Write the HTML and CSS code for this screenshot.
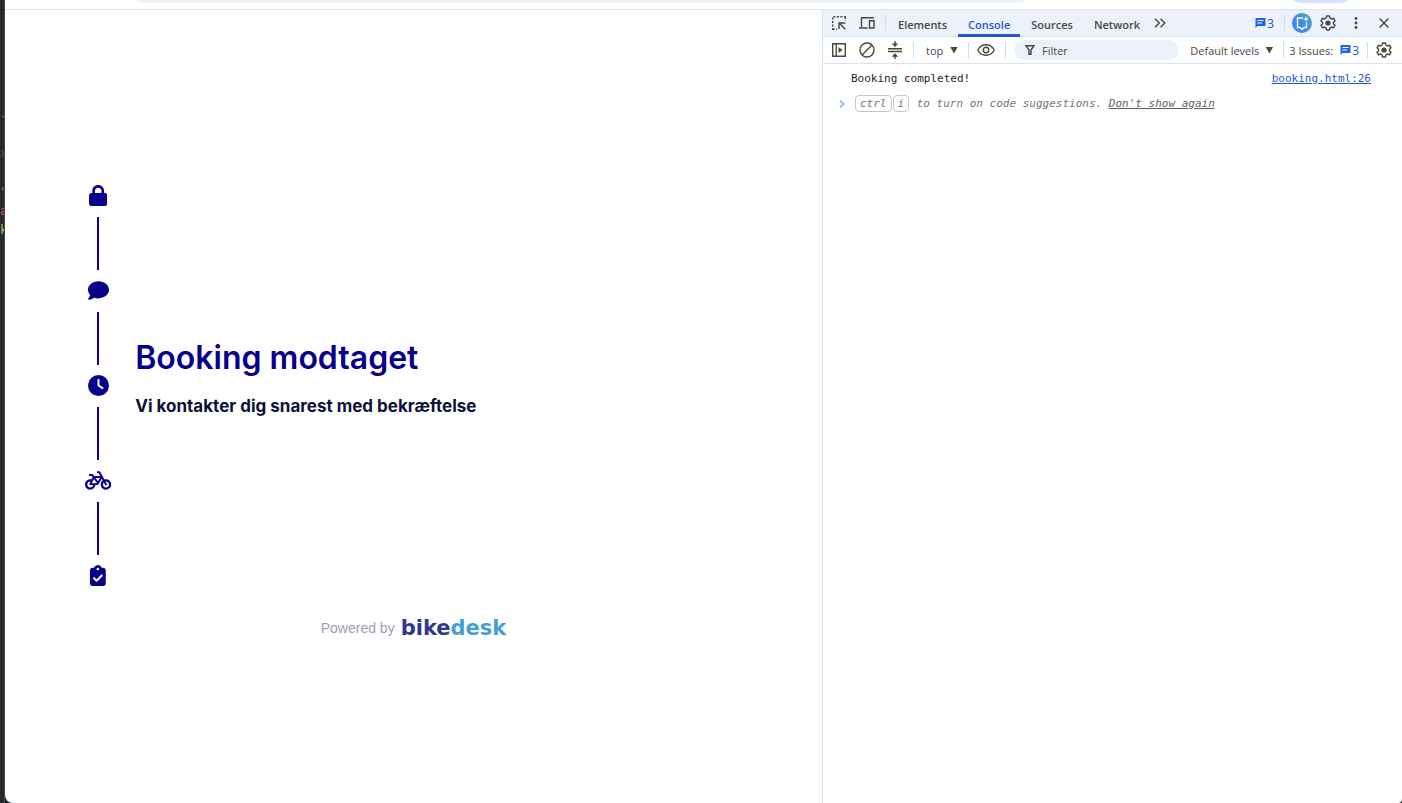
FILE: index.html
```html
<!DOCTYPE html>
<html lang="da">
<head>
    <meta charset="UTF-8">
    <meta name="viewport" content="width=device-width, initial-scale=1.0">
    <title>Booking</title>
    <link rel="stylesheet" href="styles.css">
</head>
<body>
    <div class="editor">
        <span class="green">-</span>
        <span class="grey">x</span>
        <span class="green">"</span>
        <span class="red">a</span>
        <span class="lime">k</span>
    </div>

    <div class="window">
        <div class="browser-bar">
            <div class="address"></div>
            <div class="profile"></div>
        </div>

        <div class="content">
            <main class="page">
                <div class="booking">
                    <div class="timeline">
                        <div class="step"><svg viewBox="0 0 448 512"><path d="M144 144v48H304V144c0-44.2-35.8-80-80-80s-80 35.8-80 80zM80 192V144C80 64.5 144.5 0 224 0s144 64.5 144 144v48h16c35.3 0 64 28.7 64 64V448c0 35.3-28.7 64-64 64H64c-35.3 0-64-28.7-64-64V256c0-35.3 28.7-64 64-64H80z"/></svg></div>
                        <div class="line"></div>
                        <div class="step"><svg viewBox="0 0 512 512"><path d="M512 240c0 114.9-114.6 208-256 208c-37.1 0-72.3-6.4-104.1-17.9c-11.9 8.7-31.3 20.6-54.3 30.6C73.6 471.1 44.7 480 16 480c-6.5 0-12.3-3.9-14.8-9.9c-2.5-6-1.1-12.8 3.4-17.4l.3-.3c.3-.3 .7-.7 1.3-1.4c1.1-1.2 2.8-3.1 4.9-5.7c4.1-5 9.6-12.4 15.2-21.6c10-16.6 19.5-38.4 21.4-62.9C17.7 326.8 0 285.1 0 240C0 125.1 114.6 32 256 32s256 93.1 256 208z"/></svg></div>
                        <div class="line"></div>
                        <div class="step"><svg viewBox="0 0 512 512"><path d="M256 0a256 256 0 1 1 0 512A256 256 0 1 1 256 0zM232 120V256c0 8 4 15.5 10.7 20l96 64c11 7.4 25.9 4.4 33.3-6.7s4.4-25.9-6.7-33.3L280 243.2V120c0-13.3-10.7-24-24-24s-24 10.7-24 24z"/></svg></div>
                        <div class="line"></div>
                        <div class="step"><svg viewBox="0 0 640 512"><path d="M312 32c-13.3 0-24 10.7-24 24s10.7 24 24 24h25.7l34.6 64H222.9l-27.4-38C191 99.7 183.7 96 176 96H120c-13.3 0-24 10.7-24 24s10.7 24 24 24h43.7l22.1 30.7-26.6 53.1c-10-2.5-20.5-3.8-31.2-3.8C57.3 224 0 281.3 0 352s57.3 128 128 128c65.3 0 119.1-48.9 127-112h49c8.5 0 16.3-4.5 20.7-11.8l84.8-143.5 21.7 40.1C402.4 276.3 384 312 384 352c0 70.7 57.3 128 128 128s128-57.3 128-128s-57.3-128-128-128c-13.5 0-26.5 2.1-38.7 6L375.4 48.8C369.8 38.4 359 32 347.2 32H312zM458.6 303.7l32.3 59.7c6.3 11.7 20.9 16 32.5 9.7s16-20.9 9.7-32.5l-32.3-59.7c3.6-.6 7.4-.9 11.2-.9c39.8 0 72 32.2 72 72s-32.2 72-72 72s-72-32.2-72-72c0-18.6 7-35.5 18.6-48.3zM133.2 368h65c-7.3 32.1-36 56-70.2 56c-39.8 0-72-32.2-72-72s32.2-72 72-72c1.7 0 3.4 .1 5.1 .2l-24.2 48.5c-9 18.1 4.1 39.4 24.3 39.4zm33.7-48l50.7-101.3 72.9 101.2-.1 .1H166.8zm90.6-128H365.9L317 274.8 257.4 192z"/></svg></div>
                        <div class="line"></div>
                        <div class="step"><svg viewBox="0 0 384 512"><path d="M192 0c-41.8 0-77.4 26.7-90.5 64H64C28.7 64 0 92.7 0 128V448c0 35.3 28.7 64 64 64H320c35.3 0 64-28.7 64-64V128c0-35.3-28.7-64-64-64H282.5C269.4 26.7 233.8 0 192 0zm0 64a32 32 0 1 1 0 64 32 32 0 1 1 0-64zM305 273L177 401c-9.4 9.4-24.6 9.4-33.9 0L79 337c-9.4-9.4-9.4-24.6 0-33.9s24.6-9.4 33.9 0l47 47L271 239c9.4-9.4 24.6-9.4 33.9 0s9.4 24.6 0 33.9z"/></svg></div>
                    </div>
                    <div class="message">
                        <h1>Booking modtaget</h1>
                        <h2>Vi kontakter dig snarest med bekræftelse</h2>
                    </div>
                </div>
                <footer class="powered">
                    <span>Powered by</span>
                    <span class="logo">bike<span class="logo-end">desk</span></span>
                </footer>
            </main>

            <aside class="devtools">
                <div class="bar tabs-bar">
                    <button class="icon-button" aria-label="Inspect">
                        <svg width="16" height="16" viewBox="0 0 16 16"><path class="stroke" stroke-dasharray="2 1.5" d="M1.7 15V1.7H15M1.7 14.3H6M14.3 2V6"/><path class="stroke" stroke-width="1.7" d="M8 14V8h6.300M8.300 8.300l6 6"/></svg>
                    </button>
                    <button class="icon-button" aria-label="Device toolbar">
                        <svg width="18" height="16" viewBox="0 0 18 16"><path class="stroke" d="M3.500 12V2.700H16M1 13h8.500M11.500 5.700H16V13H11.500z" stroke-width="1.600"/></svg>
                    </button>
                    <span class="separator"></span>
                    <nav class="tabs">
                        <button class="tab">Elements</button>
                        <button class="tab active">Console</button>
                        <button class="tab">Sources</button>
                        <button class="tab">Network</button>
                    </nav>
                    <button class="more" aria-label="More tabs">
                        <svg width="12" height="10" viewBox="0 0 12 10"><path class="stroke" d="M1 .7 5.300 5 1 9.300M6.500.7 10.800 5 6.500 9.300"/></svg>
                    </button>
                    <span class="spacer"></span>
                    <button class="issues" aria-label="Issues">
                        <svg width="11" height="10" viewBox="0 0 11 10"><path fill="#1f64f0" d="M.5 0h10v8H2.500L.5 10z"/><path stroke="#fff" d="M2.500 2.500h6M2.500 5h4.500"/></svg>
                        <span class="count">3</span>
                    </button>
                    <span class="separator"></span>
                    <button class="assist" aria-label="AI assistance">
                        <svg width="20" height="20" viewBox="0 0 20 20"><defs><linearGradient id="assist" x1="0" y1="1" x2="1" y2="0"><stop offset="0" stop-color="#4285f4"/><stop offset=".5" stop-color="#4285f4"/><stop offset="1" stop-color="#50b59a"/></linearGradient></defs><circle cx="10" cy="10" r="10" fill="url(#assist)"/><path fill="none" stroke="#fff" stroke-width="1.300" d="M11 5H5.500v9.500H8l2 2 2-2h2.500V9.500"/><path fill="#fff" d="M14 3l.8 2.200L17 6l-2.200.8L14 9l-.8-2.200L11 6l2.200-.8z"/></svg>
                    </button>
                    <button class="icon-button" aria-label="Settings">
                        <svg width="16" height="16" viewBox="0 0 16 16"><path class="stroke" stroke-linejoin="round" d="M6.500 1h3l.4 2.100 1.600.9 2-.8L15 5.800 13.400 7.200v1.600L15 10.200l-1.500 2.600-2-.8-1.600.9L9.500 15h-3l-.4-2.100-1.600-.9-2 .8L1 10.200l1.600-1.400V7.200L1 5.800l1.500-2.600 2 .8 1.600-.9z"/><circle cx="8" cy="8" r="2.600" fill="#474747"/></svg>
                    </button>
                    <button class="icon-button" aria-label="Menu">
                        <svg width="4" height="12" viewBox="0 0 4 12" fill="#474747"><circle cx="2" cy="1.500" r="1.400"/><circle cx="2" cy="6" r="1.400"/><circle cx="2" cy="10.500" r="1.400"/></svg>
                    </button>
                    <button class="icon-button" aria-label="Close">
                        <svg width="10" height="10" viewBox="0 0 10 10"><path class="stroke" d="M.6.600l8.800 8.800M9.400.6.600 9.400"/></svg>
                    </button>
                </div>

                <div class="bar console-bar">
                    <button class="icon-button" aria-label="Sidebar">
                        <svg width="14" height="14" viewBox="0 0 14 14"><path class="stroke" d="M.7.700h12.600v12.600H.7zM4.200.7v12.600"/><path fill="#474747" d="M6.500 4v6l4-3z"/></svg>
                    </button>
                    <button class="icon-button" aria-label="Clear console">
                        <svg width="16" height="16" viewBox="0 0 16 16"><circle class="stroke" cx="8" cy="8" r="7"/><path class="stroke" d="M13 3 3 13"/></svg>
                    </button>
                    <button class="icon-button" aria-label="Group">
                        <svg width="14" height="18" viewBox="0 0 14 18"><path class="stroke" d="M0 7.700h14M0 10.500h14M7 0v3M7 15v3"/><path fill="#474747" d="M3.700 2.400h6.600L7 6zM3.700 15.800h6.600L7 12.200z"/></svg>
                    </button>
                    <span class="separator"></span>
                    <label class="dropdown context">
                        <select aria-label="Context"><option>top</option></select>
                    </label>
                    <span class="separator"></span>
                    <button class="eye" aria-label="Live expression">
                        <svg width="18" height="12" viewBox="0 0 18 12"><path class="stroke" d="M.8 6C2.500 2.600 5.500.7 9 .7S15.500 2.600 17.200 6C15.500 9.400 12.500 11.300 9 11.300S2.500 9.400.8 6z"/><circle class="stroke" cx="9" cy="6" r="2.700"/></svg>
                    </button>
                    <span class="separator"></span>
                    <label class="filter">
                        <svg width="10" height="10" viewBox="0 0 10 10"><path class="stroke" d="M1 .8h8L6 5v4.300H4V5z"/></svg>
                        <input type="text" placeholder="Filter" aria-label="Filter">
                    </label>
                    <label class="dropdown levels">
                        <select aria-label="Log levels"><option>Default levels</option></select>
                    </label>
                    <span class="separator"></span>
                    <button class="issues-count">
                        <span>3 Issues:</span>
                        <svg width="11" height="10" viewBox="0 0 11 10"><path fill="#1f64f0" d="M.5 0h10v8H2.500L.5 10z"/><path stroke="#fff" d="M2.500 2.500h6M2.500 5h4.500"/></svg>
                        <span class="count">3</span>
                    </button>
                    <span class="separator"></span>
                    <button class="icon-button" aria-label="Console settings">
                        <svg width="16" height="16" viewBox="0 0 16 16"><path class="stroke" stroke-linejoin="round" d="M6.500 1h3l.4 2.100 1.600.9 2-.8L15 5.800 13.400 7.200v1.600L15 10.200l-1.500 2.600-2-.8-1.600.9L9.500 15h-3l-.4-2.100-1.600-.9-2 .8L1 10.200l1.600-1.400V7.200L1 5.800l1.500-2.600 2 .8 1.600-.9z"/><circle cx="8" cy="8" r="2.600" fill="#474747"/></svg>
                    </button>
                </div>

                <div class="console">
                    <div class="log">
                        <span>Booking completed!</span>
                        <a href="#">booking.html:26</a>
                    </div>
                    <div class="prompt">
                        <svg width="6" height="8" viewBox="0 0 6 8"><path fill="none" stroke="#7ba5f5" stroke-width="1.400" d="M1 .6 4.700 4 1 7.400"/></svg>
                        <p><kbd>ctrl</kbd><kbd>i</kbd> to turn on code suggestions. <a href="#">Don't show again</a></p>
                    </div>
                </div>
            </aside>
        </div>
    </div>
</body>
</html>
```

FILE: styles.css
```css
*{
    margin: 0;
    box-sizing: border-box;
}

body{
    display: flex;
    min-height: 100vh;
    background-color: #25282d;
    font-family: "Open Sans", sans-serif;
}

button{
    padding: 0;
    border: none;
    background: none;
    color: inherit;
    font: inherit;
    cursor: pointer;
}

/* code editor behind the window */
.editor{
    width: 5px;
    padding-top: 107px;
    display: flex;
    flex-direction: column;
    overflow: hidden;
    border-right: 1px solid #45484c;
    font-family: "DejaVu Sans Mono", monospace;
    font-size: 12px;
    line-height: 19px;
}

.green{
    color: #6a9955;
    margin-bottom: 18px;
}

.grey{
    color: #4b5058;
    margin-bottom: 20px;
}

.green + .red{
    margin-top: -18px;
}

.red{
    color: #e05561;
}

.lime{
    color: #a5c261;
}

.window{
    flex: 1;
    min-width: 0;
    display: flex;
    flex-direction: column;
    overflow: hidden;
    background-color: white;
    border-radius: 0 0 4px 8px;
}

.browser-bar{
    height: 10px;
    display: flex;
    align-items: flex-end;
    gap: 251px;
    padding: 0 46px 6px 124px;
    border-bottom: 1px solid #dfe1e5;
    overflow: hidden;
}

.address{
    flex: 1;
    height: 34px;
    border-radius: 17px;
    background-color: #edf2fa;
}

.profile{
    width: 71px;
    height: 34px;
    border-radius: 17px;
    background-color: #d3e3fd;
}

.content{
    flex: 1;
    display: flex;
}

/* booking page */
.page{
    flex: 1;
    display: flex;
    flex-direction: column;
    justify-content: center;
    gap: 20px;
}

.booking{
    display: flex;
    align-items: center;
    gap: 24px;
    padding-left: 80px;
}

.timeline{
    display: flex;
    flex-direction: column;
    align-items: center;
}

.step{
    height: 42px;
    display: flex;
    align-items: center;
}

.step svg{
    height: 21px;
    fill: #08008b;
}

.line{
    width: 2px;
    height: 53px;
    background-color: #08008b;
}

.message{
    padding-bottom: 16px;
    font-family: Inter, sans-serif;
}

.message h1{
    color: #08008b;
    font-size: 32px;
    font-weight: 600;
    line-height: 40px;
}

.message h2{
    margin-top: 16px;
    color: #0c1136;
    font-size: 17px;
    font-weight: 700;
    line-height: 24px;
}

.powered{
    display: flex;
    justify-content: center;
    align-items: center;
    gap: 6px;
    color: #9a9fb5;
    font-family: "Liberation Sans", Arial, sans-serif;
    font-size: 14px;
    line-height: 22px;
}

.logo{
    color: #2f3790;
    font-family: "DejaVu Sans", sans-serif;
    font-size: 21px;
    font-weight: 700;
}

.logo-end{
    color: #449fd6;
}

/* devtools */
.devtools{
    width: 580px;
    border-left: 1px solid #d3e3fd;
    color: #474747;
    font-size: 11px;
}

.stroke{
    fill: none;
    stroke: #474747;
    stroke-width: 1.4;
}

.bar{
    height: 27px;
    display: flex;
    align-items: center;
    padding: 0 4px 0 2px;
    border-bottom: 1px solid #d3e3fd;
}

.bar button{
    display: flex;
    justify-content: center;
    align-items: center;
    flex-shrink: 0;
}

.tabs-bar{
    background-color: #edf2fa;
}

.bar .icon-button{
    width: 28px;
    height: 26px;
}

.separator{
    width: 1px;
    height: 16px;
    flex-shrink: 0;
    margin: 0 2px 0 4px;
    background-color: #c9dcfb;
}

.tabs{
    display: flex;
    gap: 1px;
}

.bar .tab{
    height: 27px;
    padding: 5px 10px 0;
    border-bottom: 3px solid transparent;
    font-weight: 600;
}

.bar .active{
    color: #1f58d0;
    border-bottom-color: #1f58d0;
}

.more{
    margin-left: 4px;
}

.spacer{
    flex: 1;
}

.issues{
    gap: 1px;
    margin-right: 6px;
}

.assist{
    width: 24px;
    margin-left: 3px;
}

.dropdown{
    display: flex;
    align-items: center;
}

.dropdown select{
    appearance: none;
    padding: 0 14px 0 0;
    border: none;
    background: none;
    color: #474747;
    font: inherit;
}

.dropdown::after{
    content: "";
    width: 8px;
    height: 7px;
    margin-left: -8px;
    background-color: #474747;
    clip-path: polygon(0 0, 100% 0, 50% 100%);
    pointer-events: none;
}

.context{
    margin: 0 6px 0 10px;
}

.eye{
    width: 30px;
}

.filter{
    flex: 1;
    min-width: 0;
    height: 20px;
    display: flex;
    align-items: center;
    gap: 7px;
    margin-left: 6px;
    padding: 0 11px;
    border-radius: 10px;
    background-color: #edf2fa;
}

.filter input{
    flex: 1;
    min-width: 0;
    padding: 0;
    border: none;
    outline: none;
    background: none;
    font: inherit;
}

.filter input::placeholder{
    color: #474747;
}

.levels{
    margin: 0 6px 0 11px;
}

.issues-count{
    gap: 1px;
    margin: 0 4px 0 3px;
}

.issues-count svg{
    margin-left: 6px;
}

.count{
    color: #1f58d0;
    font-size: 12px;
}

.console{
    padding-top: 5px;
    font-family: "DejaVu Sans Mono", monospace;
    line-height: 20px;
}

.log{
    display: flex;
    justify-content: space-between;
    padding: 0 31px 0 28px;
    color: #1f1f1f;
}

.log a{
    color: #1f58d0;
}

.prompt{
    display: flex;
    align-items: center;
    gap: 10px;
    margin-top: 5px;
    padding-left: 16px;
    color: #757575;
    font-style: italic;
}

.prompt a{
    color: #5f5f5f;
}

.prompt kbd{
    margin-right: 1px;
    padding: 1px 4px;
    border: 1px solid #c7c7c7;
    border-radius: 4px;
    font: inherit;
}
```
